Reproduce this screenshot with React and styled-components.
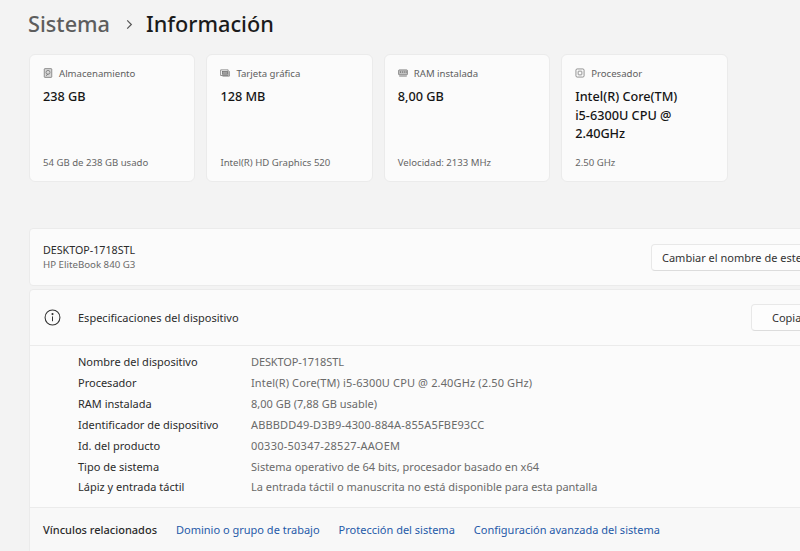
import React from "react";
import styled, { createGlobalStyle } from "styled-components";

const GlobalStyle = createGlobalStyle`
  html, body {
    margin: 0;
    padding: 0;
    height: 100%;
    overflow: hidden;
    background: #f3f3f3;
  }
  * {
    box-sizing: border-box;
  }
`;

const Page = styled.div`
  width: 800px;
  height: 551px;
  overflow: hidden;
  padding-left: 29px;
  background: #f3f3f3;
  font-family: "Noto Sans", "Open Sans", sans-serif;
  color: #1b1b1b;
`;

const Title = styled.h1`
  display: flex;
  align-items: center;
  height: 48px;
  margin: 0 0 6px -1px;
  font-size: 21.7px;
  font-weight: 500;
  line-height: 48px;
`;

const Parent = styled.span`
  color: #5d5d5d;
`;

const Chevron = styled.svg`
  width: 11px;
  height: 11px;
  margin: 1px 11px 0 14px;
`;

const Cards = styled.div`
  display: flex;
  gap: 11px;
  margin-bottom: 46px;
`;

const Card = styled.section`
  display: flex;
  flex-direction: column;
  width: 166.4px;
  height: 128px;
  padding: 11px 13px 11px;
  background: #fbfbfb;
  border: 1px solid #ebebeb;
  border-radius: 6px;
`;

const CardLabel = styled.div`
  display: flex;
  align-items: center;
  gap: 6px;
  height: 14px;
  font-size: 9.6px;
  color: #606060;
`;

const CardIcon = styled.svg`
  width: 10px;
  height: 10px;
  flex: none;
`;

const CardValue = styled.div`
  flex: 1;
  max-width: 115px;
  margin-top: 7px;
  font-size: 12.7px;
  font-weight: 500;
  line-height: 18.5px;
  color: #151515;
`;

const CardNote = styled.div`
  font-size: 9.6px;
  line-height: 14px;
  color: #666;
`;

const DeviceRow = styled.section`
  display: flex;
  align-items: center;
  justify-content: space-between;
  width: 790px;
  height: 58px;
  padding: 0 0 0 13px;
  margin-bottom: 3px;
  background: #fbfbfb;
  border: 1px solid #ebebeb;
  border-radius: 4px;
`;

const DeviceName = styled.div`
  font-size: 10.7px;
  line-height: 14px;
  color: #2b2b2b;
`;

const DeviceModel = styled.div`
  margin-top: 1px;
  font-size: 9.7px;
  line-height: 14px;
  color: #6a6a6a;
`;

const Button = styled.div`
  flex: none;
  display: flex;
  align-items: center;
  height: 27px;
  white-space: nowrap;
  overflow: hidden;
  font-size: 11px;
  color: #333;
  background: #fdfdfd;
  border: 1px solid #e8e8e8;
  border-bottom-color: #dcdcdc;
  border-radius: 4px;
  width: ${(p) => p.$width}px;
  padding-left: ${(p) => p.$pad}px;
`;

const Specs = styled.section`
  width: 790px;
  height: 262px;
  background: #fbfbfb;
  border: 1px solid #ebebeb;
  border-radius: 4px 4px 0 0;
`;

const SpecsHeader = styled.header`
  display: flex;
  align-items: center;
  height: 56px;
  padding-left: 14px;
  border-bottom: 1px solid #ebebeb;
`;

const InfoIcon = styled.svg`
  width: 17px;
  height: 17px;
  flex: none;
  margin-right: 17px;
`;

const SpecsTitle = styled.div`
  flex: 1;
  font-size: 11px;
  color: #2b2b2b;
`;

const SpecsList = styled.dl`
  display: grid;
  grid-template-columns: 173px 1fr;
  grid-auto-rows: 20.85px;
  align-items: center;
  height: 161px;
  margin: 0;
  padding: 5.4px 0 0 48px;
  font-size: 11px;
`;

const SpecName = styled.dt`
  color: #2b2b2b;
  white-space: nowrap;
`;

const SpecValue = styled.dd`
  margin: 0;
  color: #6a6a6a;
  white-space: nowrap;
  letter-spacing: ${(p) => p.$spacing || 0}px;
`;

const Related = styled.footer`
  display: flex;
  align-items: center;
  gap: 19px;
  height: 44px;
  padding-left: 13px;
  background: #f8f8f8;
  border-top: 1px solid #ebebeb;
  font-size: 11px;
`;

const RelatedLabel = styled.div`
  font-weight: 500;
  color: #2b2b2b;
`;

const RelatedLink = styled.a`
  color: #1f5aa8;
  white-space: nowrap;
`;

const iconProps = {
  viewBox: "0 0 16 16",
  fill: "none",
  stroke: "#707070",
  strokeWidth: 1.2,
};

const DiskIcon = () => (
  <CardIcon {...iconProps}>
    <rect x="2" y="1" width="12" height="14" rx="1" fill="#d8d8d8" />
    <circle cx="8" cy="7" r="3.2" />
    <path d="M5 13l3-4" />
  </CardIcon>
);

const GpuIcon = () => (
  <CardIcon {...iconProps}>
    <path d="M1 3h12v9H1z" />
    <rect x="4" y="5.5" width="8" height="4.5" fill="#a0a0a0" />
    <path d="M15 5v8H4" />
  </CardIcon>
);

const RamIcon = () => (
  <CardIcon {...iconProps}>
    <rect x="1" y="3" width="14" height="8" rx="1" fill="#c4c4c4" />
    <path d="M4 5v3M7 5v3M10 5v3M13 5v3M2 13h12" />
  </CardIcon>
);

const CpuIcon = () => (
  <CardIcon {...iconProps}>
    <rect x="1.5" y="1.5" width="13" height="13" rx="2" />
    <rect x="5" y="5" width="6" height="6" rx="1" />
  </CardIcon>
);

const hardware = [
  { label: "Almacenamiento", icon: <DiskIcon />, value: "238 GB", note: "54 GB de 238 GB usado" },
  { label: "Tarjeta gráfica", icon: <GpuIcon />, value: "128 MB", note: "Intel(R) HD Graphics 520" },
  { label: "RAM instalada", icon: <RamIcon />, value: "8,00 GB", note: "Velocidad: 2133 MHz" },
  { label: "Procesador", icon: <CpuIcon />, value: "Intel(R) Core(TM) i5-6300U CPU @ 2.40GHz", note: "2.50 GHz" },
];

const specs = [
  { name: "Nombre del dispositivo", value: "DESKTOP-1718STL", spacing: -0.13 },
  { name: "Procesador", value: "Intel(R) Core(TM) i5-6300U CPU @ 2.40GHz (2.50 GHz)", spacing: 0.14 },
  { name: "RAM instalada", value: "8,00 GB (7,88 GB usable)" },
  { name: "Identificador de dispositivo", value: "ABBBDD49-D3B9-4300-884A-855A5FBE93CC", spacing: 0.16 },
  { name: "Id. del producto", value: "00330-50347-28527-AAOEM", spacing: 0.25 },
  { name: "Tipo de sistema", value: "Sistema operativo de 64 bits, procesador basado en x64" },
  { name: "Lápiz y entrada táctil", value: "La entrada táctil o manuscrita no está disponible para esta pantalla" },
];

const links = ["Dominio o grupo de trabajo", "Protección del sistema", "Configuración avanzada del sistema"];

export default function App() {
  return (
    <Page>
      <GlobalStyle />
      <Title>
        <Parent>Sistema</Parent>
        <Chevron viewBox="0 0 12 12" fill="none" stroke="#555" strokeWidth="1.3">
          <path d="M3.5 1.5L8 6l-4.5 4.5" />
        </Chevron>
        Información
      </Title>
      <Cards>
        {hardware.map((item) => (
          <Card key={item.label}>
            <CardLabel>
              {item.icon}
              {item.label}
            </CardLabel>
            <CardValue>{item.value}</CardValue>
            <CardNote>{item.note}</CardNote>
          </Card>
        ))}
      </Cards>
      <DeviceRow>
        <div>
          <DeviceName>DESKTOP-1718STL</DeviceName>
          <DeviceModel>HP EliteBook 840 G3</DeviceModel>
        </div>
        <Button $width={167} $pad={10}>Cambiar el nombre de este equipo</Button>
      </DeviceRow>
      <Specs>
        <SpecsHeader>
          <InfoIcon viewBox="0 0 16 16" fill="none" stroke="#333" strokeWidth="1">
            <circle cx="8" cy="8" r="7" />
            <path d="M8 7v4.5" />
            <circle cx="8" cy="4.8" r="0.5" fill="#333" />
          </InfoIcon>
          <SpecsTitle>Especificaciones del dispositivo</SpecsTitle>
          <Button $width={67} $pad={20}>Copiar</Button>
        </SpecsHeader>
        <SpecsList>
          {specs.map((spec) => (
            <React.Fragment key={spec.name}>
              <SpecName>{spec.name}</SpecName>
              <SpecValue $spacing={spec.spacing}>{spec.value}</SpecValue>
            </React.Fragment>
          ))}
        </SpecsList>
        <Related>
          <RelatedLabel>Vínculos relacionados</RelatedLabel>
          {links.map((link) => (
            <RelatedLink key={link}>{link}</RelatedLink>
          ))}
        </Related>
      </Specs>
    </Page>
  );
}
